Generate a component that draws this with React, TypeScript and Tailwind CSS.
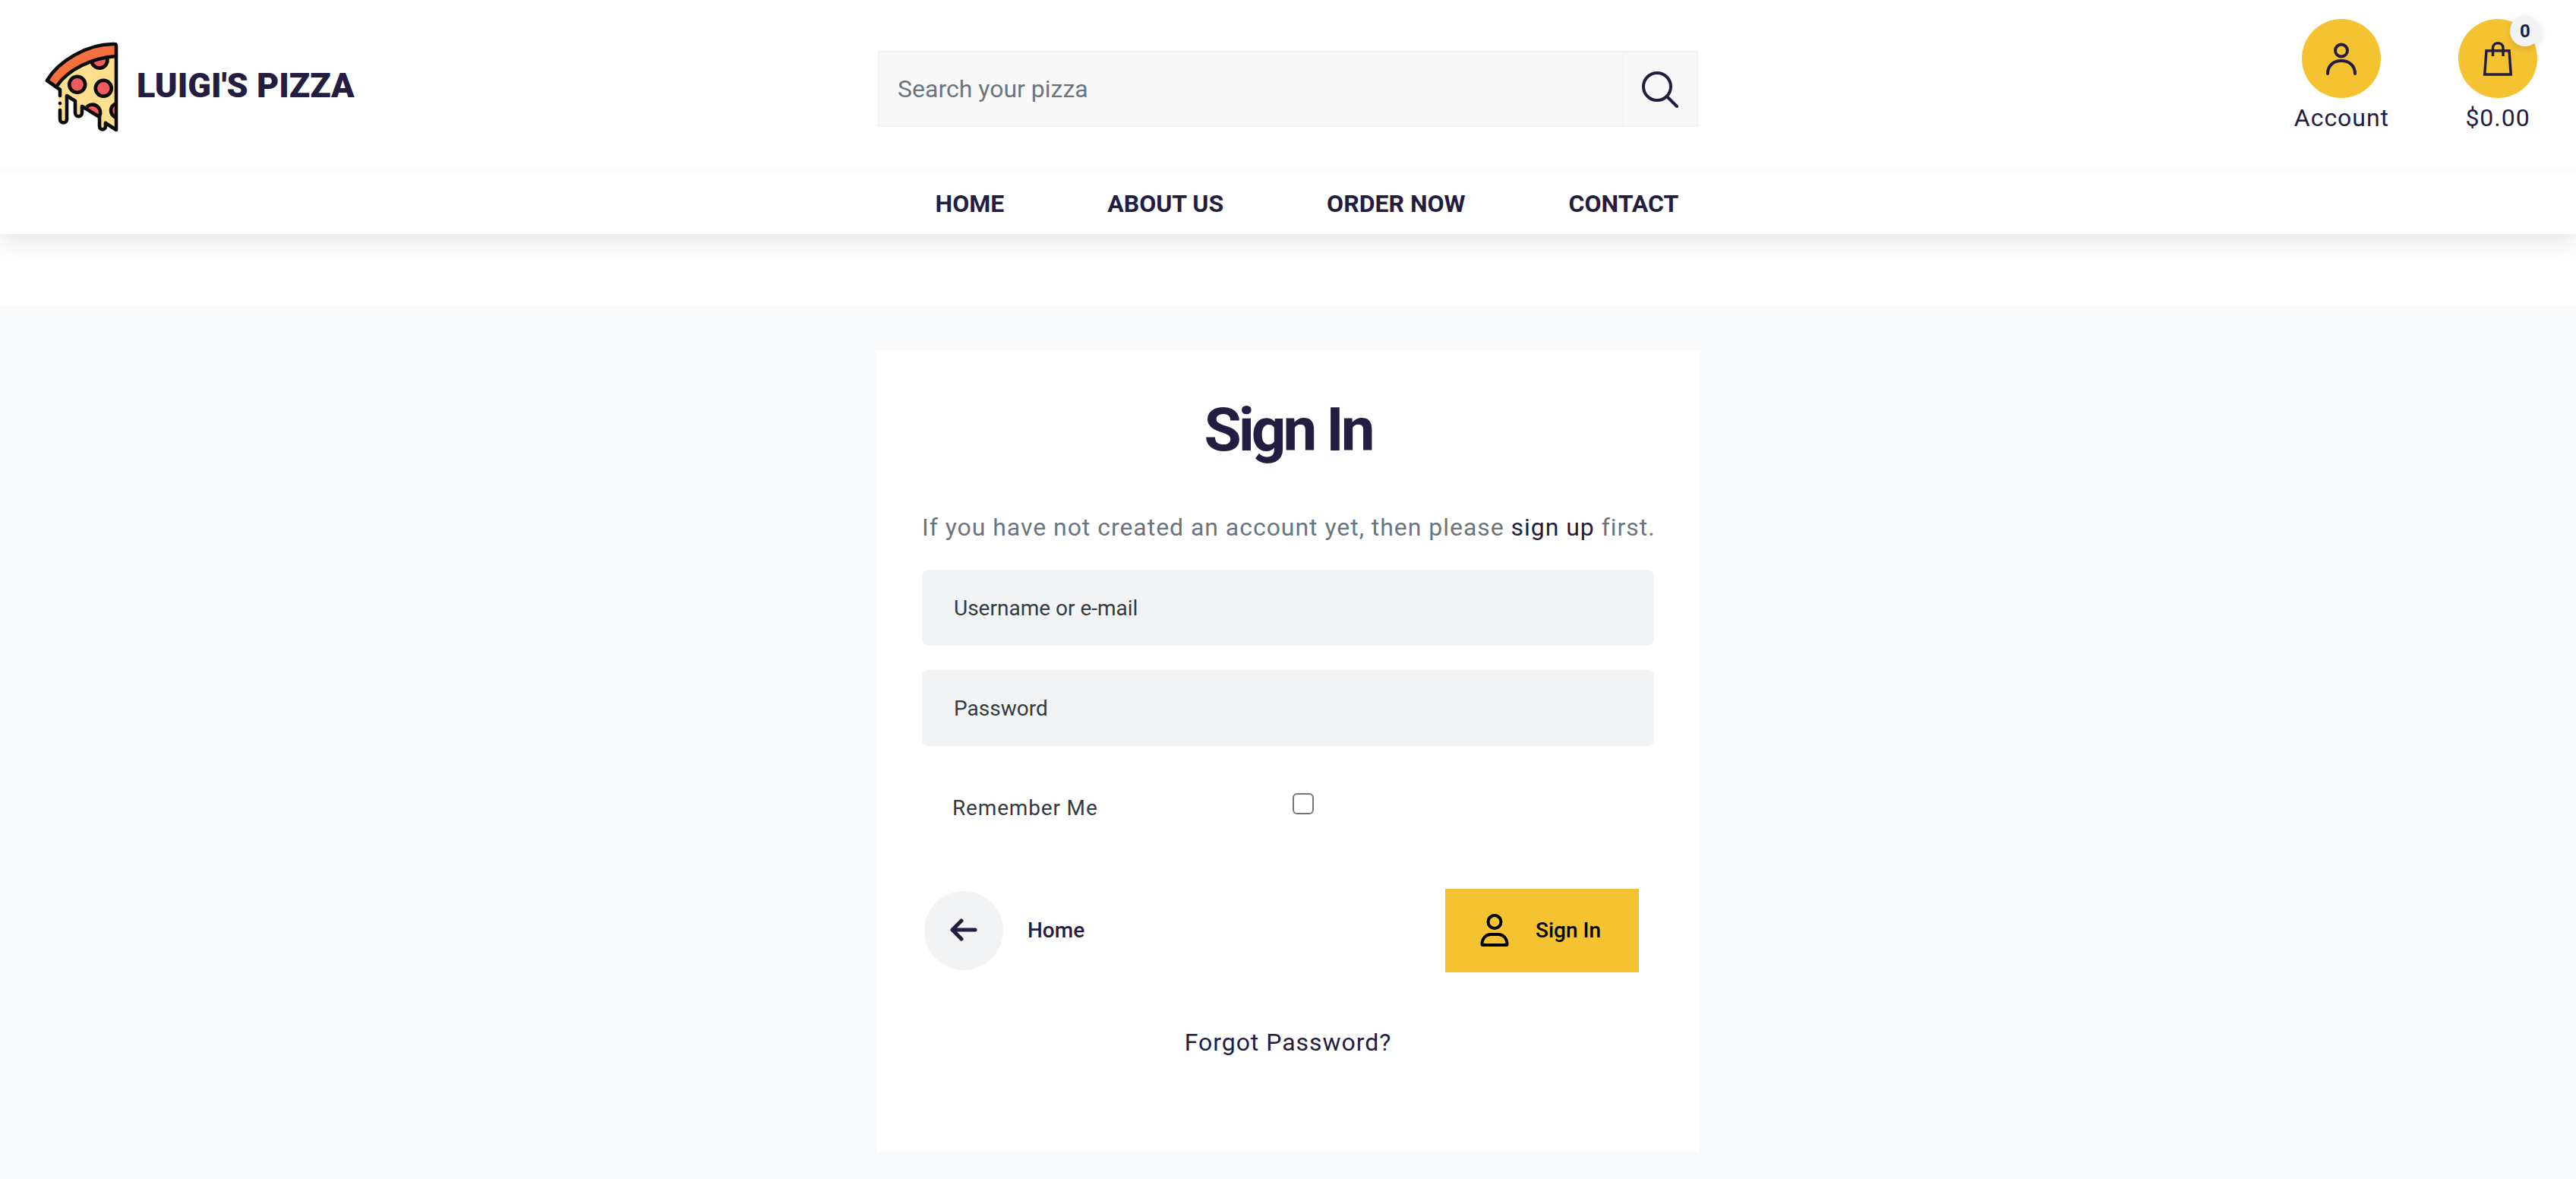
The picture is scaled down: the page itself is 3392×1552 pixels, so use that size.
import { useState } from "react";

function PizzaLogo() {
  return (
    <svg viewBox="0 0 140 150" className="h-[150px] w-[140px]" aria-hidden="true">
      <path
        d="M36 74 C52 54 82 38 113 36 L113 134 L98 124 L98 130 Q94 135 90 130 L90 116 L68 102 L68 112 Q63 118 58 112 L58 94 L48 88 L48 120 Q43 127 38 120 L38 82 Z"
        fill="#fddf8e"
      />
      <g fill="#f15b5d" stroke="#0b0b0b" strokeWidth="4.600">
        <circle cx="61.700" cy="73.300" r="10.500" />
        <circle cx="96.300" cy="78.300" r="10.500" />
        <path d="M80.500 42 A10.500 10.500 0 1 0 101 38" />
        <path d="M74 103 A10.500 10.500 0 0 1 91 115" />
        <path d="M113 98 Q106 101 106 107.500 Q106 114 113 117" />
      </g>
      <path
        d="M22 68 C36 44 74 19 111 20 Q113 20 113 22 L113 36 C80 36 50 52 34 76 L23 69 Q21 68 22 66 Z"
        fill="#f4703c"
      />
      <g fill="none" stroke="#0b0b0b" strokeWidth="4.600" strokeLinecap="round" strokeLinejoin="round">
        <path d="M22 68 C36 44 74 19 111 20 Q113 20 113 23 L113 133 L99 124" />
        <path d="M22 68 L39 80 L39 88" />
        <path d="M35 75 C50 53 82 38 113 36" />
        <path d="M39 98 L39 98.100" />
        <path d="M39 107 L39 119 C39 125 48 125 48 119 L48 88 L59 95 L59 110 C59 117 68 117 68 110 L68 102 L91 116 L91 128 C91 134 99 134 99 128 L99 124" />
      </g>
    </svg>
  );
}

function SearchIcon() {
  return (
    <svg viewBox="0 0 50 50" className="size-[50px]" fill="none" stroke="currentColor" strokeWidth="4" strokeLinecap="round" aria-hidden="true">
      <circle cx="21" cy="22" r="18" />
      <path d="M34 35 L47 48" />
    </svg>
  );
}

function PersonIcon() {
  return (
    <svg viewBox="0 0 44 44" className="size-11" fill="none" stroke="currentColor" strokeWidth="4" strokeLinecap="round" aria-hidden="true">
      <circle cx="22" cy="11.500" r="8" />
      <path d="M4 42 C4 32 11 25 22 25 S40 32 40 42" />
    </svg>
  );
}

function BagIcon() {
  return (
    <svg viewBox="0 0 44 48" className="h-12 w-11" fill="none" stroke="currentColor" strokeWidth="3.500" aria-hidden="true">
      <path d="M7 13.700 H37 L39.300 45 H4.700 Z" />
      <path d="M15.500 21 V10 C15.500 1.500 29 1.500 29 10 V21" />
    </svg>
  );
}

function ArrowIcon() {
  return (
    <svg viewBox="0 0 40 40" className="size-10" fill="none" stroke="currentColor" strokeWidth="5" strokeLinecap="round" strokeLinejoin="round" aria-hidden="true">
      <path d="M35 19 H5 M17 7 L5 19 L17 31" />
    </svg>
  );
}

function UserIcon() {
  return (
    <svg viewBox="0 0 40 48" className="h-12 w-10" fill="none" stroke="currentColor" strokeWidth="4" strokeLinejoin="round" aria-hidden="true">
      <circle cx="20" cy="12.500" r="8.500" />
      <path d="M3.500 42 C3.500 34 9 29 15 29 H25 C31 29 36.500 34 36.500 42 Q36.500 43 35.500 43 H4.500 Q3.500 43 3.500 42 Z" />
    </svg>
  );
}

const links = ["Home", "About us", "Order now", "Contact"];

export default function App() {
  const [remember, setRemember] = useState(false);
  return (
    <div className="min-h-screen bg-white font-[Roboto,sans-serif] text-[32px] leading-[48px] text-[#231d41]">
      <header className="relative bg-white shadow-[0_8px_32px_rgba(0,0,0,0.12)]">
        <div className="grid h-[220px] grid-cols-[1fr_1080px_1fr] items-start">
          <a href="#" className="flex items-center pt-[38px] pl-10">
            <PizzaLogo />
            <span className="text-[45px] font-black">LUIGI'S PIZZA</span>
          </a>
          <form role="search" className="mt-[67px] flex h-[100px] border-2 border-[#f2f2f2] bg-[#f8f8f8]" onSubmit={(e) => e.preventDefault()}>
            <input
              type="search"
              aria-label="Search your pizza"
              placeholder="Search your pizza"
              className="min-w-0 flex-1 bg-transparent px-6 outline-none placeholder:text-[#6c757d]"
            />
            <button type="submit" aria-label="Search" className="flex w-[98px] items-center justify-center border-l-2 border-[#f4f4f4]">
              <SearchIcon />
            </button>
          </form>
          <div className="flex justify-end gap-[91px] pt-[25px] pr-[51px] tracking-[0.03em]">
            <a href="#" className="flex flex-col items-center gap-0.5">
              <span className="flex size-[104px] items-center justify-center rounded-full bg-[#f5c332]">
                <PersonIcon />
              </span>
              <span>Account</span>
            </a>
            <a href="#" className="flex flex-col items-center gap-0.5">
              <span className="relative flex size-[104px] items-center justify-center rounded-full bg-[#f5c332]">
                <BagIcon />
                <span className="absolute -top-1 -right-1 flex size-10 items-center justify-center rounded-full bg-[#f1f3f5] text-2xl font-bold tracking-normal shadow-[0_4px_12px_rgba(0,0,0,0.12)]">0</span>
              </span>
              <span>$0.00</span>
            </a>
          </div>
        </div>
        <div className="h-2 bg-[#fdfdfd]" />
        <nav className="flex h-20 items-center justify-center gap-[136px] pl-[50px] font-bold uppercase">
          {links.map((l) => (
            <a href="#" key={l}>{l}</a>
          ))}
        </nav>
      </header>
      <main className="mt-[94px] flex min-h-[1150px] justify-center bg-[#f9fafc] pt-[60px] pb-9">
        <form className="flex w-[1084px] flex-col bg-white px-[60px] pt-14 pb-[120px]" onSubmit={(e) => e.preventDefault()}>
          <h1 className="text-center text-[80px] leading-[96px] font-bold tracking-tighter">Sign In</h1>
          <p className="mt-14 whitespace-nowrap tracking-[0.03em] text-[#6c757d]">
            If you have not created an account yet, then please <a href="#" className="text-[#231d41]">sign up</a> first.
          </p>
          <input type="text" aria-label="Username or e-mail" placeholder="Username or e-mail" className="mt-8 h-[100px] rounded-lg bg-[#f1f3f5] px-[42px] text-[28px] outline-none placeholder:text-[#343a40]" />
          <input type="password" aria-label="Password" placeholder="Password" className="mt-8 h-[100px] rounded-lg bg-[#f1f3f5] px-[42px] text-[28px] outline-none placeholder:text-[#343a40]" />
          <div className="mt-[58px] grid grid-cols-[448px_1fr] items-start pl-10 text-[28px] tracking-[0.03em] text-[#343a40]">
            <label htmlFor="remember">Remember Me</label>
            <input
              id="remember"
              type="checkbox"
              checked={remember}
              onChange={(e) => setRemember(e.target.checked)}
              className="mt-1 size-7 appearance-none rounded-md border-2 border-[#767676] bg-white checked:bg-[#f5c332]"
            />
          </div>
          <div className="mt-[82px] flex items-center justify-between pr-5 text-[28px] font-medium">
            <a href="#" className="flex items-center gap-8">
              <span className="ml-[3px] flex size-[104px] items-center justify-center rounded-full bg-[#f1f3f5]">
                <ArrowIcon />
              </span>
              Home
            </a>
            <button type="submit" className="flex h-[110px] items-center gap-[34px] bg-[#f5c332] pr-[50px] pl-[45px] text-black">
              <UserIcon />
              Sign In
            </button>
          </div>
          <a href="#" className="mt-[68px] self-center tracking-[0.03em]">Forgot Password?</a>
        </form>
      </main>
    </div>
  );
}
